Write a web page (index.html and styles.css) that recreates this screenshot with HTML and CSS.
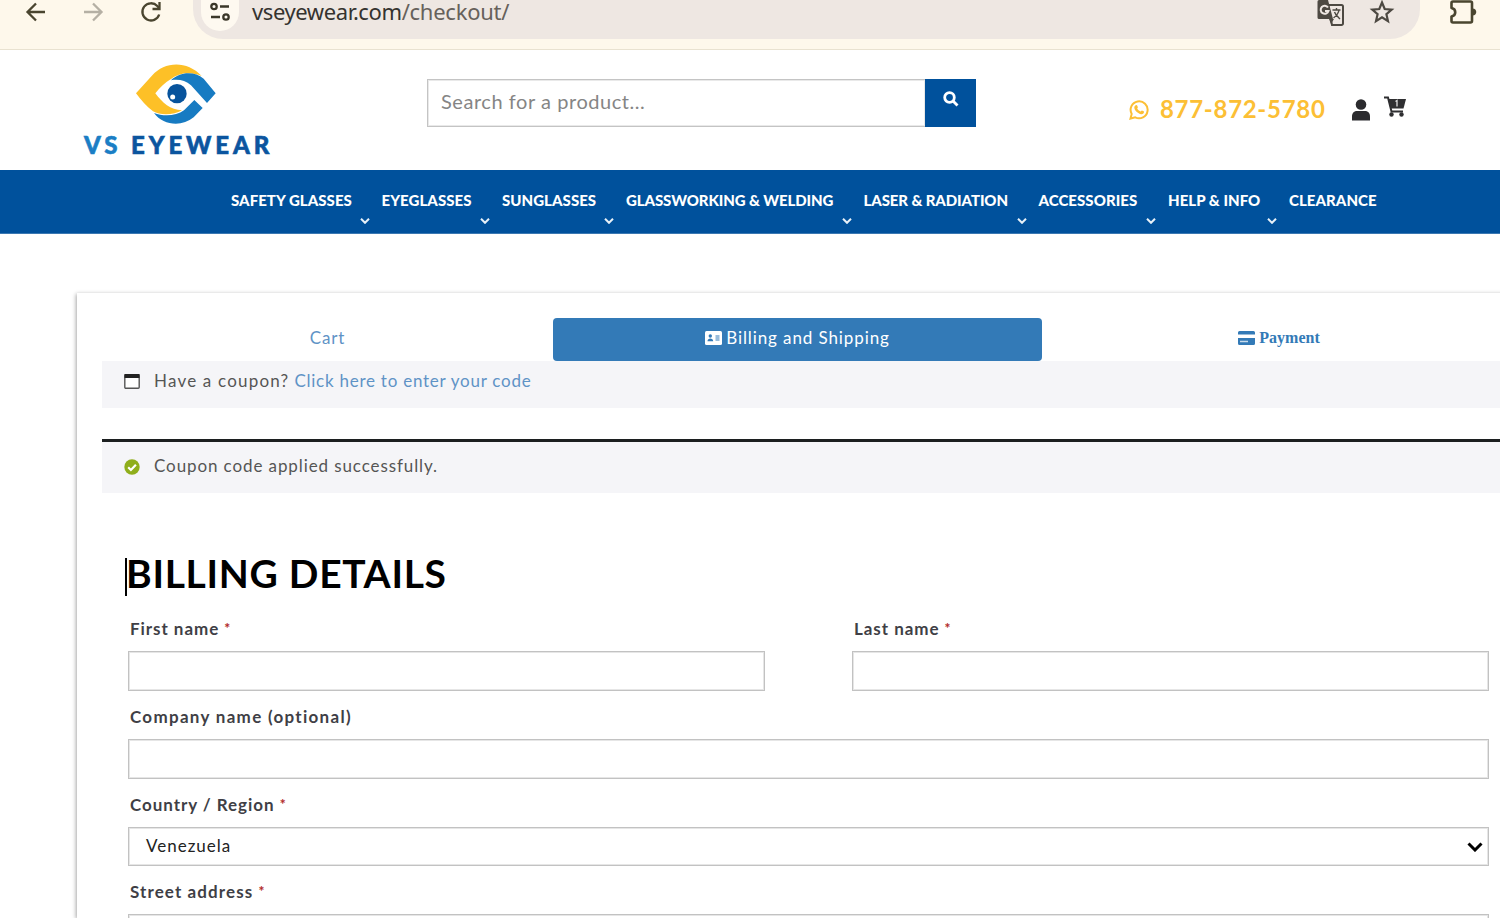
FILE: index.html
```
<!DOCTYPE html>
<html lang="en">
<head>
<meta charset="UTF-8">
<meta name="viewport" content="width=device-width, initial-scale=1.0">
<title>Checkout - VS Eyewear</title>
<link rel="stylesheet" href="styles.css">
</head>
<body>
    <!-- browser bar -->
    <div class="browser">
        <svg class="b-icon back" width="22" height="22" viewBox="0 0 22 22"><path d="M20 11H3M11 2.500L2.500 11l8.500 8.500"/></svg>
        <svg class="b-icon forward" width="22" height="22" viewBox="0 0 22 22"><path d="M2 11h17M11 2.500l8.500 8.500-8.500 8.500"/></svg>
        <svg class="b-icon reload" width="22" height="22" viewBox="0 0 22 22"><path d="M19.200 13.500A8.600 8.600 0 1 1 17.300 5L19 7"/><path d="M19.500 1v7h-7"/></svg>
        <div class="omnibox">
            <span class="site-info">
                <svg width="22" height="20" viewBox="0 0 22 20"><circle cx="5" cy="4.500" r="2.700"/><path d="M11 4.500h9M2 15h9"/><circle cx="17" cy="15" r="2.700"/></svg>
            </span>
            <span class="url">vseyewear.com<span class="path">/checkout/</span></span>
            <svg class="translate" width="28" height="26" viewBox="0 0 28 26"><path class="sheet" d="M11 5h13.500a1.500 1.500 0 0 1 1.500 1.500v17a1.500 1.500 0 0 1-1.500 1.500H15z"/><path class="fill" d="M2 0h9l5 19H2a1.500 1.500 0 0 1-1.500-1.500v-16A1.500 1.500 0 0 1 2 0zM12 19h5l-3 5z"/><path class="g" d="M11 7.500A4 4 0 1 0 11.500 11H8"/><path class="thin" d="M15.500 10h8M19.500 8v2M22 10c-.5 4-3 6-5.500 8M17.500 12c1 3 3 4.500 5.500 7"/></svg>
            <svg class="star" width="26" height="26" viewBox="0 0 26 26"><path d="M13 3.500l2.700 6.500 7 .6-5.300 4.600 1.600 6.900-6-3.700-6 3.700 1.600-6.900-5.300-4.600 7-.6z"/></svg>
        </div>
        <svg class="b-icon puzzle" width="28" height="26" viewBox="0 0 28 26"><path d="M4 2.500h17.500q1.500 0 1.500 1.500v18q0 1.500-1.500 1.500H4q-1.500 0-1.500-1.500v-4.500c5-1 5-7.500 0-8.500V4q0-1.500 1.500-1.500z"/><path class="knob" d="M23.500 9.500c5 0 5 7 0 7z"/></svg>
    </div>

    <!-- header -->
    <div class="header">
        <div class="logo">
            <svg width="82" height="62" viewBox="196 39 246 186">
                <path fill="#fdc027" d="M199 130L248 76C284 35 351 30 396 78C365 65 328 67 304 87C285 98 270 114 257 130C278 158 302 180 337 181C312 196 272 197 250 184C230 169 213 149 199 130Z"/>
                <path fill="#177bc2" d="M304 91C332 64 375 64 402 86L438 130L412 159L364 106C347 91 326 87 304 91Z"/>
                <path fill="#177bc2" d="M253 189C282 200 320 198 343 181L374 150L399 174L372 202C336 232 280 226 253 189Z"/>
                <circle cx="322" cy="131" r="29" fill="#07539c"/>
                <circle cx="309" cy="141" r="7.500" fill="#fff"/>
            </svg>
            <div class="brand"><span>VS</span> EYEWEAR</div>
        </div>
        <div class="search">
            <input type="text" placeholder="Search for a product...">
            <button>
                <svg width="16" height="16" viewBox="0 0 16 16"><circle cx="6.500" cy="6.500" r="4.800"/><path d="M10 10l4.500 4.500"/></svg>
            </button>
        </div>
        <div class="contact">
            <svg class="whatsapp" width="20" height="20" viewBox="0 0 20 20"><path class="ring" d="M1.500 18.500l1.200-4.600A8.500 8.500 0 1 1 6.200 17.300z"/><path class="handset" d="M6.600 5.200c1.200-.7 1.600 0 2.200 1.700.3.800-.8 1.300-.6 1.700.8 1.400 1.700 2.200 3.200 2.900.5.200 1-.9 1.500-.9.600.2 2 .8 2.100 1.200.1 1.300-1 2.500-2.700 2.400-3.500-.4-6.900-4-7-6.700 0-1 .6-1.900 1.300-2.300z"/></svg>
            <span class="phone">877-872-5780</span>
            <svg class="user" width="20" height="22" viewBox="0 0 20 22"><circle cx="10" cy="5.500" r="5.300"/><path d="M1 21.500v-4c0-4 2.500-5.500 5-5.500h8c2.500 0 5 1.500 5 5.500v4z"/></svg>
            <svg class="cart" width="24" height="21" viewBox="0 0 24 21"><path d="M1 1.500h4l3.500 14H20"/><path class="fill" d="M5 3h18l-2.500 9.500H7.500z"/><circle class="fill" cx="8.500" cy="18.500" r="2.200"/><circle class="fill" cx="18.500" cy="18.500" r="2.200"/><path class="mark" d="M12.500 5.500l1.500-1v6"/></svg>
        </div>
    </div>

    <div class="nav">
        <a>SAFETY GLASSES<svg width="10" height="6" viewBox="0 0 10 6"><path d="M1 .8l4 4 4-4"/></svg></a>
        <a>EYEGLASSES<svg width="10" height="6" viewBox="0 0 10 6"><path d="M1 .8l4 4 4-4"/></svg></a>
        <a>SUNGLASSES<svg width="10" height="6" viewBox="0 0 10 6"><path d="M1 .8l4 4 4-4"/></svg></a>
        <a class="long">GLASSWORKING &amp; WELDING<svg width="10" height="6" viewBox="0 0 10 6"><path d="M1 .8l4 4 4-4"/></svg></a>
        <a class="long">LASER &amp; RADIATION<svg width="10" height="6" viewBox="0 0 10 6"><path d="M1 .8l4 4 4-4"/></svg></a>
        <a>ACCESSORIES<svg width="10" height="6" viewBox="0 0 10 6"><path d="M1 .8l4 4 4-4"/></svg></a>
        <a>HELP &amp; INFO<svg width="10" height="6" viewBox="0 0 10 6"><path d="M1 .8l4 4 4-4"/></svg></a>
        <a>CLEARANCE</a>
    </div>

    <!-- checkout -->
    <div class="checkout">
        <div class="tabs">
            <a class="tab">Cart</a>
            <a class="tab active">
                <svg width="17" height="14" viewBox="0 0 17 14"><rect width="17" height="14" rx="1.500" fill="#fff"/><circle cx="5.300" cy="5" r="1.700" fill="#337ab7"/><path d="M2.500 10.300c0-3.600 5.700-3.600 5.700 0zM10.500 4.500h4v1h-4zM10.500 6.500h4v1h-4zM10.500 8.500h4v1h-4z" fill="#337ab7"/></svg>
                <span>Billing and Shipping</span>
            </a>
            <a class="tab payment">
                <svg width="17" height="14" viewBox="0 0 17 14"><path d="M1.500 0h14A1.500 1.500 0 0 1 17 1.500v2H0v-2A1.500 1.500 0 0 1 1.500 0zM0 7h17v5.500a1.500 1.500 0 0 1-1.500 1.500h-14A1.500 1.500 0 0 1 0 12.500z" fill="#337ab7"/><path d="M2 10.500h8" stroke="#c9dcec" stroke-width="1.500"/></svg>
                <span>Payment</span>
            </a>
        </div>
        <div class="notice info">
            <svg width="16" height="15" viewBox="0 0 16 15"><rect x=".8" y=".8" width="14.400" height="13.400" rx="1" fill="#fff" stroke="#555" stroke-width="1.400"/><path d="M.5 0h15v4H.5z" fill="#222"/></svg>
            <span class="question">Have a coupon?</span>
            <a>Click here to enter your code</a>
        </div>
        <div class="notice success">
            <svg width="16" height="16" viewBox="0 0 16 16"><circle cx="8" cy="8" r="7.700" fill="#8fae1b"/><path d="M4.200 8.300l2.700 2.700 5-5.200" fill="none" stroke="#fff" stroke-width="2.200"/></svg>
            <span>Coupon code applied successfully.</span>
        </div>

        <div class="billing">
            <h1>BILLING DETAILS</h1>
            <div class="row">
                <div class="field">
                    <label for="first">First name <b>*</b></label>
                    <input type="text" id="first">
                </div>
                <div class="field">
                    <label for="last">Last name <b>*</b></label>
                    <input type="text" id="last">
                </div>
            </div>
            <div class="field">
                <label class="company" for="company">Company name (optional)</label>
                <input type="text" id="company">
            </div>
            <div class="field">
                <label>Country / Region <b>*</b></label>
                <div class="select">
                    <span>Venezuela</span>
                    <svg width="16" height="10" viewBox="0 0 16 10"><path d="M1.500 1.500L8 8l6.500-6.500"/></svg>
                </div>
            </div>
            <div class="field">
                <label class="street" for="street">Street address <b>*</b></label>
                <input type="text" id="street">
            </div>
        </div>
    </div>
</body>
</html>
```
FILE: styles.css
```
* {
    box-sizing: border-box;
}
body {
    margin: 0;
    width: 1500px;
    height: 918px;
    overflow: hidden;
    background-color: #fff;
    font-family: Lato, sans-serif;
    font-size: 17px;
    color: #555;
}
svg {
    flex: none;
}
input {
    font-family: inherit;
    outline: none;
    border-radius: 0;
}

/* browser bar */
.browser {
    height: 50px;
    background-color: #fef8eb;
    border-bottom: 1px solid #e9e2d0;
    display: flex;
    align-items: flex-start;
}
.b-icon {
    fill: none;
    stroke: #4a452f;
    stroke-width: 2.3;
    margin-top: 1px;
}
.back {
    margin-left: 25px;
}
.forward {
    margin-left: 35px;
    stroke: #b5b0a4;
}
.reload {
    margin-left: 36px;
}
.omnibox {
    margin-left: 31px;
    width: 1227px;
    height: 39px;
    background-color: #eee7e2;
    border-radius: 0 0 30px 30px;
    display: flex;
    align-items: flex-start;
}
.site-info {
    width: 38px;
    height: 31px;
    margin-left: 8px;
    border-radius: 0 0 19px 19px;
    background-color: #fef9f0;
    padding: 2px 8px;
}
.site-info svg {
    fill: none;
    stroke: #3b3729;
    stroke-width: 2.3;
}
.url {
    font-family: "Noto Sans", sans-serif;
    font-size: 22px;
    line-height: 23px;
    color: #35332f;
    margin-left: 13px;
    width: 1065px;
    letter-spacing: -0.4px;
}
.path {
    color: #66615b;
    letter-spacing: -0.25px;
}
.translate .sheet {
    fill: none;
    stroke: #4d4942;
    stroke-width: 2;
}
.translate .fill {
    fill: #4d4942;
}
.translate .g {
    fill: none;
    stroke: #eee7e2;
    stroke-width: 2;
}
.translate .thin {
    fill: none;
    stroke: #4d4942;
    stroke-width: 1.4;
}
.star {
    fill: none;
    stroke: #4d4942;
    stroke-width: 2.2;
    margin-left: 24px;
    margin-top: -1px;
}
.puzzle {
    margin-left: 29px;
    margin-top: -1px;
    stroke-linejoin: round;
    stroke-width: 2.6;
}
.knob {
    fill: #4a452f;
    stroke: none;
}

/* header */
.header {
    height: 120px;
    display: flex;
    align-items: flex-start;
    padding-left: 84px;
}
.logo {
    width: 188px;
    padding-top: 13px;
}
.logo svg {
    display: block;
    margin-left: 51px;
}
.brand {
    font-size: 24px;
    font-weight: 900;
    line-height: 24px;
    margin-top: 8px;
    letter-spacing: 3.9px;
    color: #0b559f;
    -webkit-text-stroke: 0.6px currentColor;
    white-space: nowrap;
}
.brand span {
    color: #1a7ec5;
}
.search {
    display: flex;
    margin-left: 155px;
    margin-top: 29px;
}
.search input {
    width: 498px;
    height: 48px;
    border: 1px solid #c4c4c4;
    box-shadow: inset 0 0 0 1px #e9e9e9;
    border-right: none;
    padding: 0 13px 5px;
    font-size: 20px;
    letter-spacing: 0.55px;
}
.search input::placeholder {
    color: #858585;
}
.search button {
    width: 51px;
    height: 48px;
    border: none;
    background-color: #00519c;
    padding: 0 0 6px;
}
.search button svg {
    fill: none;
    stroke: #fff;
    stroke-width: 2.8;
}
.contact {
    display: flex;
    margin-left: 153px;
    margin-top: 46px;
}
.whatsapp {
    margin-top: 4px;
}
.ring {
    fill: none;
    stroke: #fcbf35;
    stroke-width: 2;
}
.handset {
    fill: #fcbf35;
}
.phone {
    margin-left: 11px;
    width: 192px;
    font-size: 24px;
    font-weight: bold;
    line-height: 26px;
    letter-spacing: 0.7px;
    color: #fcbf35;
}
.user {
    fill: #2b2b2e;
    margin-top: 3px;
    margin-left: -1px;
}
.cart {
    margin-left: 12px;
    fill: none;
    stroke: #2f2f31;
    stroke-width: 2;
}
.cart .fill {
    fill: #2f2f31;
    stroke: none;
}
.cart .mark {
    stroke: #ddd;
    stroke-width: 1.3;
}

/* menu */
.nav {
    height: 64px;
    padding: 21px 0 0 231px;
    background-color: #00519c;
    border-bottom: 1px solid #3b78b2;
    display: grid;
    grid-template-columns: 150.500px 120.500px 124px 237.500px 175px 129.500px 121px 100px;
}
.nav a {
    display: flex;
    flex-direction: column;
    font-size: 15px;
    font-weight: 900;
    line-height: 18px;
    letter-spacing: 0.05px;
    color: #fff;
    white-space: nowrap;
}
.nav .long {
    letter-spacing: -0.1px;
}
.nav svg {
    align-self: flex-end;
    margin: 9px 12px 0 0;
    fill: none;
    stroke: #e8f1f8;
    stroke-width: 2;
}

/* checkout */
.checkout {
    margin: 59px 0 0 77px;
    width: 1464px;
    height: 625px;
    overflow: hidden;
    padding: 25px 25px 0 25px;
    box-shadow: -1px 1px 4px rgba(0,0,0,0.35);
}
.tabs {
    display: grid;
    grid-template-columns: 451px 489px 474px;
    height: 43px;
}
.tab {
    display: flex;
    justify-content: center;
    align-items: center;
    gap: 4px;
    padding-bottom: 4px;
    color: #5f93c6;
    letter-spacing: 0.9px;
}
.tab.active {
    background-color: #337ab7;
    color: #fff;
    border-radius: 4px;
}
.tab.payment {
    font-family: "Liberation Serif", serif;
    font-weight: bold;
    font-size: 16px;
    letter-spacing: 0;
    padding-bottom: 3px;
    color: #337ab7;
}
.notice {
    background-color: #f5f5f8;
    display: flex;
    align-items: center;
    padding-left: 22px;
    letter-spacing: 0.9px;
}
.notice svg {
    margin-right: 14px;
    margin-top: 2px;
}
.notice.info {
    height: 47px;
    padding-bottom: 8px;
}
.question {
    letter-spacing: 1.2px;
}
.notice a {
    color: #5f93c6;
    margin-left: 5px;
    letter-spacing: 0.75px;
}
.notice.success {
    height: 54px;
    margin-top: 31px;
    border-top: 3px solid #1c1f20;
    padding-bottom: 4px;
}
.billing {
    width: 1361px;
    margin-left: 26px;
    margin-top: 65px;
}
h1 {
    margin: 0 0 0 -3px;
    width: 330px;
    height: 38px;
    border-left: 2px solid #000;
    font-size: 39px;
    font-weight: bold;
    line-height: 30px;
    letter-spacing: 0.7px;
    text-indent: -1px;
    color: #000;
    white-space: nowrap;
}
.row {
    display: flex;
    gap: 87px;
}
.field {
    flex: 1;
}
label {
    display: block;
    height: 48px;
    padding: 15px 0 0 2px;
    line-height: 22px;
    font-weight: bold;
    color: #3f3f46;
    letter-spacing: 0.95px;
}
label.company {
    letter-spacing: 1.3px;
}
label.street {
    letter-spacing: 1.1px;
}
label b {
    color: #b22a2a;
    font-size: 14px;
    line-height: 1;
    vertical-align: 2px;
}
.row label {
    height: 55px;
    padding-top: 22px;
}
.field input,
.select {
    display: block;
    width: 100%;
    height: 40px;
    border: 1px solid #c2c2c2;
    box-shadow: inset 0 0 0 1px #e6e6e6;
    background-color: #fff;
}
.select {
    height: 39px;
    display: flex;
    align-items: center;
    justify-content: space-between;
    padding: 0 5px 2px 17px;
    color: #222;
    letter-spacing: 1px;
}
.select svg {
    fill: none;
    stroke: #000;
    stroke-width: 3;
    margin-top: 2px;
}
```
